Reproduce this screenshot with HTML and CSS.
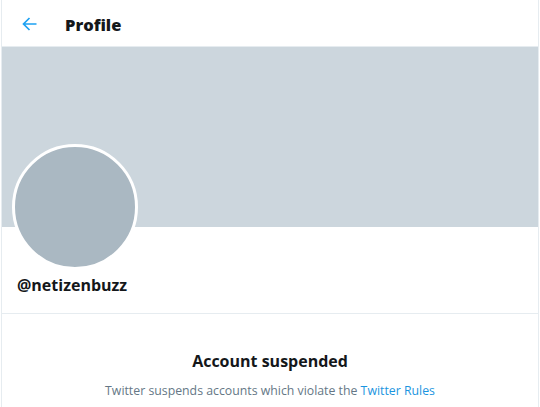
FILE: index.html
```html
<!DOCTYPE html>
<html>
<head>
    <title>Profile</title>
    <link rel="stylesheet" href="styles.css">
</head>
<body>
    <div class="column">
        <div class="header">
            <a class="back" href="#">
                <svg viewBox="0 0 15 14" width="15" height="14">
                    <path d="M14.5 7H1.5M7.5 1L1.5 7l6 6"></path>
                </svg>
            </a>
            <h1>Profile</h1>
        </div>
        <div class="banner"></div>
        <div class="profile">
            <div class="avatar"></div>
            <div class="handle">@netizenbuzz</div>
        </div>
        <div class="suspended">
            <h2>Account suspended</h2>
            <p>Twitter suspends accounts which violate the <a href="#">Twitter Rules</a></p>
        </div>
    </div>
</body>
</html>
```

FILE: styles.css
```css
body {
    margin: 0;
    padding: 0 0 0 1px;
    background-color: #fff;
    font-family: "Open Sans", "Noto Sans", sans-serif;
    color: #14171a;
}
.column {
    width: 536px;
    min-height: 407px;
    border-left: 1px solid #e6ecf0;
    border-right: 1px solid #e6ecf0;
}
.header {
    display: flex;
    align-items: center;
    height: 47px;
    padding: 2px 15px 0;
    box-sizing: border-box;
    border-bottom: 1px solid #e6ecf0;
}
.back {
    display: flex;
    margin: 0 28px 0 5px;
}
.back path {
    fill: none;
    stroke: #1da1f2;
    stroke-width: 1.7;
}
h1 {
    margin: 0;
    font-size: 16.5px;
    font-weight: 800;
}
.banner {
    height: 180px;
    background-color: #ccd6dd;
}
.profile {
    display: flex;
    flex-direction: column;
    height: 86px;
    padding: 0 15px;
    border-bottom: 1px solid #e6ecf0;
}
.avatar {
    width: 120px;
    height: 120px;
    margin-top: -83px;
    margin-left: -5px;
    border: 3px solid #fff;
    border-radius: 50%;
    background-color: #aab8c2;
}
.handle {
    margin-top: 4px;
    font-size: 16px;
    font-weight: 700;
}
.suspended {
    text-align: center;
    padding-top: 36px;
}
h2 {
    margin: 0;
    font-size: 16px;
    font-weight: 700;
}
.suspended p {
    margin: 10px 0 0;
    font-size: 12.3px;
    color: #657786;
}
.suspended a {
    color: #1b95e0;
    text-decoration: none;
}
```
